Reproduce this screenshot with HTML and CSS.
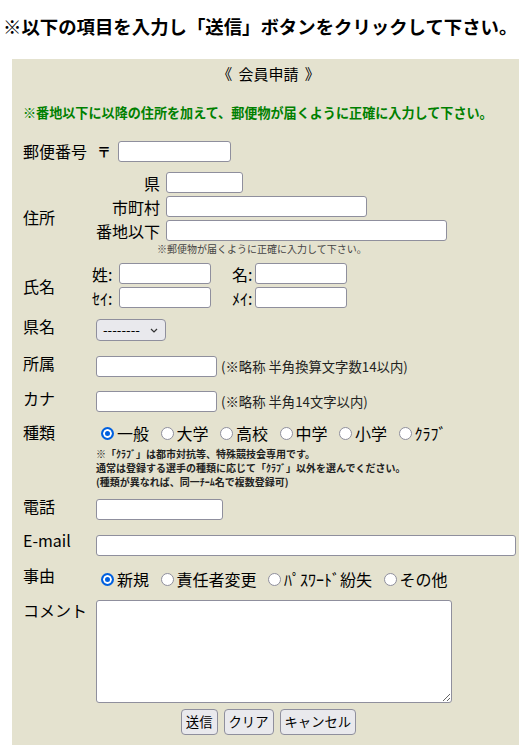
FILE: index.html
```html
<!DOCTYPE html>
<html lang="ja">
<head>
<meta charset="utf-8">
<title>会員申請</title>
<link rel="stylesheet" href="styles.css">
</head>
<body>
<h1 class="title">※以下の項目を入力し「送信」ボタンをクリックして下さい。</h1>
<form class="panel">
  <div class="panel-head">《 会員申請 》</div>
  <p class="notice">※番地以下に以降の住所を加えて、郵便物が届くように正確に入力して下さい。</p>

  <div class="row row-zip">
    <div class="label">郵便番号</div>
    <div class="field"><span class="postmark">〒</span><input class="in w-zip" type="text"></div>
  </div>

  <div class="row row-addr">
    <div class="label label-mid">住所</div>
    <div class="field">
      <div class="addr">
        <span class="sublabel">県</span><input class="in w-pref" type="text">
        <span class="sublabel">市町村</span><input class="in w-city" type="text">
        <span class="sublabel">番地以下</span><input class="in w-street" type="text">
      </div>
      <div class="tiny">※郵便物が届くように正確に入力して下さい。</div>
    </div>
  </div>

  <div class="row row-name">
    <div class="label label-center">氏名</div>
    <div class="field">
      <div class="names">
        <span class="nlabel">姓:</span><input class="in w-name" type="text">
        <span class="nlabel nlabel-2">名:</span><input class="in w-name" type="text">
        <span class="nlabel">ｾｲ:</span><input class="in w-name" type="text">
        <span class="nlabel nlabel-2">ﾒｲ:</span><input class="in w-name" type="text">
      </div>
    </div>
  </div>

  <div class="row row-pref">
    <div class="label">県名</div>
    <div class="field">
      <span class="select-wrap">
        <select class="sel"><option>--------</option></select>
        <svg class="chev" width="8" height="5" viewBox="0 0 8 5"><path d="M1 1 L4 4 L7 1" fill="none" stroke="#333" stroke-width="1.2"/></svg>
      </span>
    </div>
  </div>

  <div class="row row-team">
    <div class="label">所属</div>
    <div class="field"><input class="in w-team" type="text"><span class="hint">(※略称 半角換算文字数14以内)</span></div>
  </div>

  <div class="row row-kana">
    <div class="label">カナ</div>
    <div class="field"><input class="in w-team" type="text"><span class="hint">(※略称 半角14文字以内)</span></div>
  </div>

  <div class="row row-kind">
    <div class="label label-kind">種類</div>
    <div class="field">
      <div class="radios">
        <label class="opt"><input type="radio" name="kind" class="rd" checked>一般</label>
        <label class="opt"><input type="radio" name="kind" class="rd">大学</label>
        <label class="opt"><input type="radio" name="kind" class="rd">高校</label>
        <label class="opt"><input type="radio" name="kind" class="rd">中学</label>
        <label class="opt"><input type="radio" name="kind" class="rd">小学</label>
        <label class="opt"><input type="radio" name="kind" class="rd">ｸﾗﾌﾞ</label>
      </div>
      <div class="kind-notes">
        <div>※「ｸﾗﾌﾞ」は都市対抗等、特殊競技会専用です。</div>
        <div>通常は登録する選手の種類に応じて「ｸﾗﾌﾞ」以外を選んでください。</div>
        <div>(種類が異なれば、同一ﾁｰﾑ名で複数登録可)</div>
      </div>
    </div>
  </div>

  <div class="row row-tel">
    <div class="label">電話</div>
    <div class="field"><input class="in w-tel" type="text"></div>
  </div>

  <div class="row row-mail">
    <div class="label label-mail">E-mail</div>
    <div class="field"><input class="in w-mail" type="text"></div>
  </div>

  <div class="row row-reason">
    <div class="label label-reason">事由</div>
    <div class="field">
      <div class="radios">
        <label class="opt"><input type="radio" name="reason" class="rd" checked>新規</label>
        <label class="opt"><input type="radio" name="reason" class="rd">責任者変更</label>
        <label class="opt"><input type="radio" name="reason" class="rd">ﾊﾟｽﾜｰﾄﾞ紛失</label>
        <label class="opt"><input type="radio" name="reason" class="rd">その他</label>
      </div>
    </div>
  </div>

  <div class="row row-comment">
    <div class="label label-comment">コメント</div>
    <div class="field"><textarea class="ta"></textarea></div>
  </div>

  <div class="buttons">
    <button type="button" class="btn">送信</button>
    <button type="button" class="btn">クリア</button>
    <button type="button" class="btn">キャンセル</button>
  </div>
</form>
</body>
</html>
```

FILE: styles.css
```css
html, body {
  overflow: hidden;
}
body {
  margin: 0;
  background: #ffffff;
  color: #000000;
  font-family: "Noto Sans CJK JP", "Noto Sans", sans-serif;
}
.title {
  margin: 0;
  padding: 13px 0 20px 3px;
  font-size: 18.4px;
  line-height: 26px;
  font-weight: bold;
  text-align: left;
  white-space: nowrap;
}
.panel {
  margin: 0 0 0 12px;
  width: 513px;
  box-sizing: border-box;
  background: #e4e2cf;
  padding: 5px 0 40px 11px;
}
.panel-head {
  font-size: 15px;
  line-height: 20px;
  text-align: center;
  word-spacing: 3px;
  margin-left: -11px;
}
.notice {
  margin: 20px 0 0;
  font-size: 13.1px;
  line-height: 17px;
  font-weight: bold;
  color: #008000;
  white-space: nowrap;
}
.row {
  display: flex;
  align-items: flex-start;
}
.label {
  flex: none;
  width: 73px;
  font-size: 16px;
  line-height: 16px;
  margin-top: -1px;
}
.field {
  font-size: 16px;
}
.in {
  box-sizing: border-box;
  height: 21px;
  border: 1px solid #8f8f9d;
  border-radius: 3px;
  background: #ffffff;
  padding: 0 4px;
  margin: 0;
  font-size: 13px;
  display: block;
}

/* 郵便番号 */
.row-zip { margin-top: 20px; align-items: center; }
.row-zip .label { margin-top: -1px; }
.row-zip .field { display: flex; align-items: center; }
.postmark {
  display: inline-block;
  width: 22px;
  font-size: 14px;
  font-weight: bold;
  line-height: 21px;
  padding-left: 1px;
  box-sizing: border-box;
}
.w-zip { width: 113px; }

/* 住所 */
.row-addr { margin-top: 10px; align-items: center; }
.label-mid { margin-top: 6px; }
.addr {
  display: grid;
  grid-template-columns: 64px auto;
  column-gap: 6px;
  row-gap: 3px;
  align-items: center;
  justify-items: start;
}
.sublabel {
  justify-self: end;
  font-size: 16px;
  line-height: 16px;
}
.w-pref { width: 77px; }
.w-city { width: 201px; }
.w-street { width: 281px; }
.tiny {
  margin-top: 1px;
  padding-left: 61px;
  font-size: 10px;
  line-height: 13px;
  color: #444;
  white-space: nowrap;
}

/* 氏名 */
.row-name { margin-top: 8px; align-items: center; }
.label-center { margin-top: 0; }
.names {
  display: grid;
  grid-template-columns: 27px 92px 44px 92px;
  row-gap: 3px;
  align-items: center;
  margin-left: -4px;
}
.nlabel {
  font-size: 16px;
  line-height: 16px;
  white-space: nowrap;
}
.nlabel-2 { padding-left: 21px; }
.w-name { width: 92px; }

/* 県名 */
.row-pref { margin-top: 11px; }
.select-wrap {
  position: relative;
  display: inline-block;
  vertical-align: top;
}
.sel {
  appearance: none;
  -webkit-appearance: none;
  display: block;
  box-sizing: border-box;
  width: 70px;
  height: 22px;
  margin: 0;
  padding: 0 0 0 6px;
  border: 1px solid #8f8f9d;
  border-radius: 4px;
  background: #e9e9ed;
  color: #000;
  font-family: "Noto Sans CJK JP", sans-serif;
  font-size: 13.33px;
  line-height: 20px;
}
.chev {
  position: absolute;
  left: 54px;
  top: 9px;
  pointer-events: none;
}

/* 所属 / カナ */
.row-team { margin-top: 13px; }
.row-kana { margin-top: 14px; }
.row-team .field, .row-kana .field {
  display: flex;
  align-items: center;
}
.w-team { width: 121px; }
.hint {
  margin-left: 4px;
  font-size: 13.33px;
  line-height: 21px;
  color: #222;
  white-space: nowrap;
}

/* 種類 / 事由 */
.row-kind { margin-top: 11px; }
.row-reason { margin-top: 13px; }
.label-kind { margin-top: 1px; }
.label-reason { margin-top: -2px; }
.radios {
  display: flex;
  align-items: center;
  height: 20px;
  white-space: nowrap;
}
.opt {
  display: inline-flex;
  align-items: center;
  font-size: 16px;
  line-height: 20px;
  margin-right: 6.5px;
}
.rd {
  appearance: none;
  -webkit-appearance: none;
  box-sizing: border-box;
  width: 13px;
  height: 13px;
  margin: 0 3px 0 5px;
  border: 1px solid #8f8f9d;
  border-radius: 50%;
  background: #ffffff;
}
.rd:checked {
  border: 2px solid #0060df;
  background: #0060df;
  box-shadow: inset 0 0 0 2px #ffffff;
}
.kind-notes {
  margin-top: 4px;
  font-size: 10px;
  line-height: 14px;
  font-weight: bold;
  color: #222;
  white-space: nowrap;
}

/* 電話 / E-mail */
.row-tel { margin-top: 10px; }
.w-tel { width: 127px; }
.row-mail { margin-top: 15px; }
.label-mail { margin-top: -3px; }
.w-mail { width: 420px; }

/* コメント */
.row-comment { margin-top: 11px; }
.label-comment { margin-top: 2px; }
.ta {
  display: block;
  box-sizing: border-box;
  width: 356px;
  height: 103px;
  margin: 0;
  border: 1px solid #8f8f9d;
  border-radius: 3px;
  background: #ffffff;
}

/* ボタン */
.buttons {
  margin-top: 6px;
  margin-left: -11px;
  display: flex;
  justify-content: center;
  gap: 6px;
}
.btn {
  box-sizing: border-box;
  height: 26px;
  padding: 0 4px;
  margin: 0;
  border: 1px solid #8f8f9d;
  border-radius: 4px;
  background: #e9e9ed;
  color: #000;
  font-family: "Noto Sans CJK JP", sans-serif;
  font-size: 13.33px;
  line-height: 24px;
}
```
